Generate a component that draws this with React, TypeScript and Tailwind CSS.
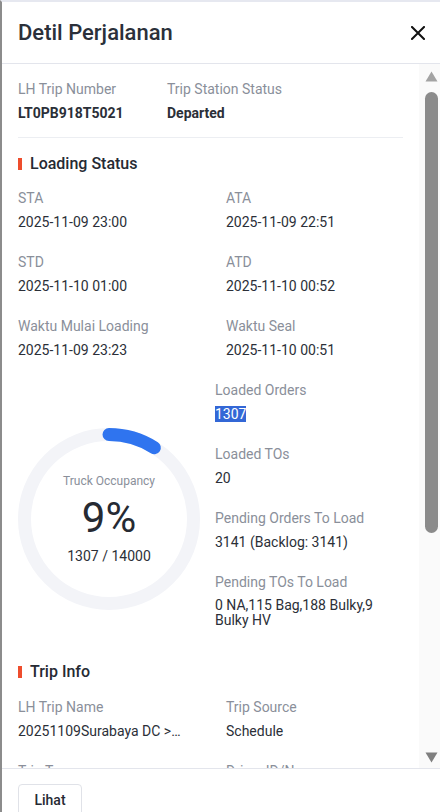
import React from 'react';

// Simple label / value pair used across the detail grid
const Field: React.FC<{ label: string; value: React.ReactNode; bold?: boolean }> = ({ label, value, bold }) => (
  <div>
    <div className="text-sm leading-5 text-[#8a8f9a]">{label}</div>
    <div className={`mt-1 text-sm leading-5 text-[#2b2f38] whitespace-nowrap ${bold ? 'font-bold' : ''}`}>{value}</div>
  </div>
);

const SectionTitle: React.FC<{ title: string }> = ({ title }) => (
  <div className="flex items-center gap-2">
    <span className="w-1 h-3 bg-[#ee4d2d]" />
    <span className="text-base leading-6 font-medium text-[#262a33]">{title}</span>
  </div>
);

const OccupancyRing: React.FC<{ percent: number; loaded: number; capacity: number }> = ({ percent, loaded, capacity }) => {
  const r = 84.5;
  const c = 2 * Math.PI * r;
  const dash = (percent / 100) * c;
  return (
    <div className="relative w-[182px] h-[182px]">
      <svg width="182" height="182" viewBox="0 0 182 182">
        <circle cx="91" cy="91" r={r} fill="none" stroke="#f3f4f8" strokeWidth="13" />
        <circle
          cx="91"
          cy="91"
          r={r}
          fill="none"
          stroke="#2f74ef"
          strokeWidth="13"
          strokeLinecap="round"
          strokeDasharray={`${dash} ${c}`}
          transform="rotate(-90 91 91)"
        />
      </svg>
      <div className="absolute inset-0 flex flex-col items-center pt-[45px]">
        <div className="text-xs leading-4 text-[#8a8f9a]">Truck Occupancy</div>
        <div className="mt-[5px] text-[42px] leading-[48px] text-[#262a33]">{percent}%</div>
        <div className="mt-1 text-sm leading-5 text-[#2b2f38]">
          {loaded} / {capacity}
        </div>
      </div>
    </div>
  );
};

const Scrollbar: React.FC = () => (
  <div className="w-[21px] h-full bg-[#fafafa] flex flex-col items-center pl-[3px] pt-[7px] pb-[5px]">
    <svg width="13" height="11" viewBox="0 0 13 11">
      <path d="M6.5 0.5 L12.5 10.5 L0.5 10.5 Z" fill="#a3a3a3" />
    </svg>
    <div className="mt-[10px] w-[13px] h-[441px] rounded-full bg-[#8b8b8b]" />
    <div className="flex-1" />
    <svg width="13" height="11" viewBox="0 0 13 11">
      <path d="M0.5 0.5 L12.5 0.5 L6.5 10.5 Z" fill="#7f7f7f" />
    </svg>
  </div>
);

const App: React.FC = () => {
  return (
    <div
      className="w-[440px] h-[812px] overflow-hidden bg-white border-l-2 border-l-[#8c8c8c] border-t-2 border-t-[#e6e8f0] flex flex-col"
      style={{ fontFamily: 'Roboto, "Noto Sans", sans-serif' }}
    >
      {/* Header */}
      <div className="h-[62px] shrink-0 border-b border-[#e3e5ec] flex items-center justify-between pl-4 pr-[15px]">
        <h1 className="text-[22px] leading-7 font-medium text-[#2b303a]">Detil Perjalanan</h1>
        <svg width="14" height="14" viewBox="0 0 14 14">
          <path d="M1 1 L13 13 M13 1 L1 13" stroke="#111" strokeWidth="2" strokeLinecap="square" />
        </svg>
      </div>

      {/* Body */}
      <div className="h-[704px] shrink-0 flex overflow-hidden">
        <div className="flex-1 overflow-hidden pl-4 pr-4 pt-[15px]">
          <div className="flex">
            <div className="w-[149px]">
              <Field label="LH Trip Number" value="LT0PB918T5021" bold />
            </div>
            <Field label="Trip Station Status" value="Departed" bold />
          </div>
          <div className="mt-[14px] border-t border-[#eceef2]" />

          <div className="mt-[14px]">
            <SectionTitle title="Loading Status" />
          </div>
          <div className="mt-3 grid grid-cols-[208px_1fr] gap-y-5">
            <Field label="STA" value="2025-11-09 23:00" />
            <Field label="ATA" value="2025-11-09 22:51" />
            <Field label="STD" value="2025-11-10 01:00" />
            <Field label="ATD" value="2025-11-10 00:52" />
            <Field label="Waktu Mulai Loading" value="2025-11-09 23:23" />
            <Field label="Waktu Seal" value="2025-11-10 00:51" />
          </div>

          <div className="mt-5 flex">
            <div className="w-[197px] shrink-0 pt-[48px]">
              <OccupancyRing percent={9} loaded={1307} capacity={14000} />
            </div>
            <div className="flex-1 flex flex-col gap-5">
              <Field label="Loaded Orders" value={<span className="bg-[#3367d6] text-white">1307</span>} />
              <Field label="Loaded TOs" value="20" />
              <Field label="Pending Orders To Load" value="3141 (Backlog: 3141)" />
              <div>
                <div className="text-sm leading-5 text-[#8a8f9a]">Pending TOs To Load</div>
                <div className="mt-[6px] text-sm leading-[15px] text-[#2b2f38]">0 NA,115 Bag,188 Bulky,9 Bulky HV</div>
              </div>
            </div>
          </div>

          <div className="mt-[32px]">
            <SectionTitle title="Trip Info" />
          </div>
          <div className="mt-[13px] grid grid-cols-[208px_1fr] gap-y-5">
            <Field label="LH Trip Name" value="20251109Surabaya DC >…" />
            <Field label="Trip Source" value="Schedule" />
            <Field label="Trip Type" value="Normal" />
            <Field label="Driver ID/Name" value="-" />
          </div>
        </div>
        <Scrollbar />
      </div>

      {/* Footer */}
      <div className="flex-1 border-t border-[#e3e5ec] pl-4 pt-[15px]">
        <button className="w-16 h-8 border border-[#e0e2e8] rounded-[4px] bg-white text-sm font-medium text-[#262a33]">
          Lihat
        </button>
      </div>
    </div>
  );
};

export default App;
